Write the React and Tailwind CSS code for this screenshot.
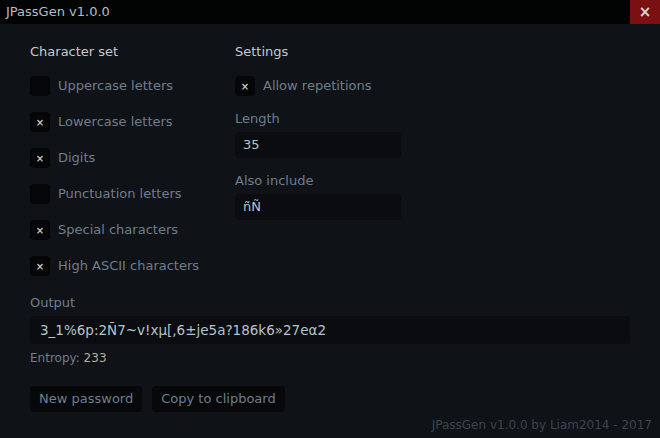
import React from 'react';

const font = { fontFamily: '"DejaVu Sans", sans-serif' };

function Check({ checked, label }) {
  return (
    <div className="flex items-center h-5 gap-2">
      <div className="w-5 h-5 rounded bg-[#050607] flex items-center justify-center text-[10px] text-[#c9c4b8] font-bold">
        {checked ? '×' : ''}
      </div>
      <span className="text-[13px] text-[#6f7d8c]">{label}</span>
    </div>
  );
}

export default function App() {
  const charset = [
    ['Uppercase letters', false],
    ['Lowercase letters', true],
    ['Digits', true],
    ['Punctuation letters', false],
    ['Special characters', true],
    ['High ASCII characters', true],
  ];

  return (
    <div className="w-[660px] h-[438px] bg-[#0f1317] flex flex-col" style={font}>
      <div className="h-6 bg-[#020303] flex items-center justify-between">
        <span className="pl-[6px] text-[13px] text-[#b5bcc4]">JPassGen v1.0.0</span>
        <div className="w-[30px] h-6 bg-[#7a1012] flex items-center justify-center text-[#d8d8d8] text-[15px] font-bold">×</div>
      </div>

      <div className="flex-1 flex flex-col px-[30px] pt-[20px] relative">
        <div className="flex">
          <div className="w-[205px]">
            <div className="text-[13px] text-[#c5c9cc] leading-4 mb-[16px]">Character set</div>
            <div className="flex flex-col gap-4">
              {charset.map(([l, c]) => (
                <Check key={l} label={l} checked={c} />
              ))}
            </div>
          </div>
          <div className="w-[166px]">
            <div className="text-[13px] text-[#c5c9cc] leading-4 mb-[16px]">Settings</div>
            <Check label="Allow repetitions" checked />
            <div className="text-[13px] text-[#6f7d8c] mt-[15px] leading-4">Length</div>
            <div className="mt-[5px] h-[26px] rounded bg-[#0a0c0f] flex items-center px-[8px] text-[13px] text-[#b8c2cc]">35</div>
            <div className="text-[13px] text-[#6f7d8c] mt-[15px] leading-4">Also include</div>
            <div className="mt-[5px] h-[26px] rounded bg-[#0a0c0f] flex items-center px-[8px] text-[13px] text-[#b8c2cc]">ñÑ</div>
          </div>
        </div>

        <div className="text-[13px] text-[#6f7d8c] mt-[19px] leading-4">Output</div>
        <div className="mt-[5px] h-[28px] rounded bg-[#0a0c0f] flex items-center px-[10px] text-[13.5px] text-[#b8c2cc]">
          3_1%6p:2Ñ7~v!xµ[,6±je5a?186k6»27eα2
        </div>
        <div className="mt-[6px] text-[12px] text-[#6f7d8c] leading-4">
          Entropy: <span className="text-[#b0b0a0]">233</span>
        </div>

        <div className="mt-[20px] flex gap-[10px]">
          <button className="h-[26px] px-[9px] rounded bg-[#060809] text-[13px] text-[#6f7d8c]">New password</button>
          <button className="h-[26px] px-[9px] rounded bg-[#060809] text-[13px] text-[#6f7d8c]">Copy to clipboard</button>
        </div>

        <div className="absolute right-[8px] bottom-[4px] text-[12px] text-[#3c444c]">JPassGen v1.0.0 by Liam2014 - 2017</div>
      </div>
    </div>
  );
}
